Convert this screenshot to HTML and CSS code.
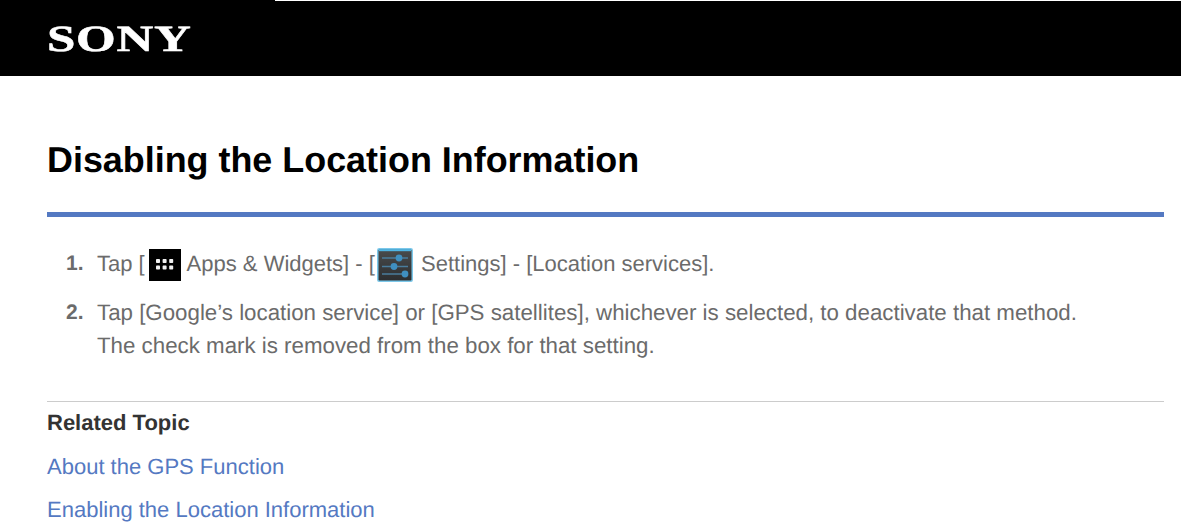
FILE: index.html
```html
<!DOCTYPE html>
<html lang="en">
<head>
<meta charset="utf-8">
<title>Disabling the Location Information</title>
<link rel="stylesheet" href="styles.css">
</head>
<body>
<header class="brand">
  <div class="brand-notch"></div>
  <div class="logo">SONY</div>
</header>
<main class="content">
  <h1 class="title">Disabling the Location Information</h1>
  <ol class="steps">
    <li class="step">
      <span class="num">1.</span>
      <p class="line first">Tap [<svg class="icon apps" viewBox="0 0 32 32" aria-hidden="true"><rect width="32" height="32" fill="#000"/><g fill="#f2f2f2"><rect x="7" y="10" width="4" height="4" rx="0.8"/><rect x="13.6" y="10" width="4" height="4" rx="0.8"/><rect x="20.2" y="10" width="4" height="4" rx="0.8"/><rect x="7" y="16.6" width="4" height="4" rx="0.8"/><rect x="13.6" y="16.6" width="4" height="4" rx="0.8"/><rect x="20.2" y="16.6" width="4" height="4" rx="0.8"/></g></svg> Apps &amp; Widgets] - [<svg class="icon settings" viewBox="0 0 36 34" aria-hidden="true"><defs><linearGradient id="set-bg" x1="0" y1="0" x2="0" y2="1"><stop offset="0" stop-color="#4a4c4d"/><stop offset="1" stop-color="#2c2e30"/></linearGradient></defs><rect x="0.75" y="0.75" width="34.5" height="32.5" rx="1.5" fill="url(#set-bg)" stroke="#7cc8ea" stroke-width="1.5"/><path d="M2 2.2h32" stroke="#4fb6e6" stroke-width="2"/><g stroke="#4a7c9c" stroke-width="1.5"><path d="M5 10h26M5 18.5h26M5 26h26"/></g><g fill="#3f8fc0"><circle cx="22" cy="10" r="3.4"/><circle cx="17" cy="18.5" r="3.4"/><circle cx="28" cy="26" r="3.4"/></g></svg> Settings] - [Location services].</p>
    </li>
    <li class="step">
      <span class="num">2.</span>
      <div>
        <p class="line">Tap [Google’s location service] or [GPS satellites], whichever is selected, to deactivate that method.</p>
        <p class="line">The check mark is removed from the box for that setting.</p>
      </div>
    </li>
  </ol>
  <section class="related">
    <h2 class="related-title">Related Topic</h2>
    <p class="related-item"><a href="#">About the GPS Function</a></p>
    <p class="related-item"><a href="#">Enabling the Location Information</a></p>
  </section>
</main>
</body>
</html>
```
FILE: styles.css
```css
html, body { margin: 0; padding: 0; }
body {
  background: #fff;
  font-family: "Liberation Sans", Arial, sans-serif;
  color: #6b6b6b;
  overflow: hidden;
  text-rendering: geometricPrecision;
}
.brand {
  position: relative;
  height: 76px;
  background: #000;
  padding: 25px 0 0 47px;
  box-sizing: border-box;
}
.brand-notch {
  position: absolute;
  left: 275px;
  right: 0;
  top: 0;
  height: 1px;
  background: #fff;
}
.logo {
  font-family: "Liberation Serif", serif;
  font-weight: 700;
  font-size: 37px;
  line-height: 29px;
  color: #fff;
  letter-spacing: 0.5px;
  -webkit-text-stroke: 0.5px #fff;
  transform: scaleX(1.38);
  transform-origin: left center;
  width: max-content;
  filter: blur(0.4px);
}
.content { padding: 0 17px 0 47px; }
.title {
  margin: 0;
  padding-top: 62px;
  font-size: 35.9px;
  line-height: 44px;
  font-weight: 700;
  color: #000;
}
.steps {
  list-style: none;
  margin: 30px 0 0;
  padding: 0;
  border-top: 5px solid #5479c2;
}
.step {
  display: flex;
  font-size: 22.3px;
  line-height: 33px;
}
.step:first-child { padding-top: 30px; }
.step + .step { margin-top: 16px; }
.num {
  width: 50px;
  padding-left: 19px;
  box-sizing: border-box;
  font-size: 21px;
  font-weight: 700;
  flex: none;
}
.line { margin: 0; }
.first { font-size: 22px; }
.icon { display: inline-block; vertical-align: middle; }
.apps { width: 32px; height: 32px; margin: -2px 1px -2px 4px; }
.settings { width: 36px; height: 34px; margin: -2px 2px -2px 2px; filter: blur(0.5px); }
.related {
  margin-top: 39px;
  border-top: 1px solid #ccc;
}
.related-title {
  margin: 0;
  padding: 6px 0 1px;
  font-size: 22px;
  line-height: 30px;
  font-weight: 700;
  color: #333;
}
.related-item {
  margin: 13px 0 0;
  font-size: 22px;
  line-height: 30px;
}
.related-item a { color: #5479c2; text-decoration: none; }
```
